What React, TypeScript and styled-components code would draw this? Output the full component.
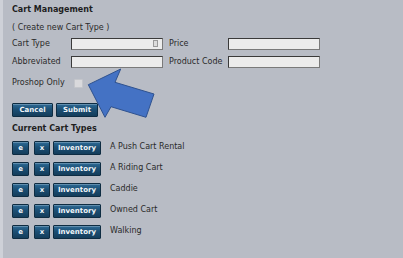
import { FC } from 'react';
import styled, { createGlobalStyle } from 'styled-components';

const GlobalStyle = createGlobalStyle`
  html, body {
    margin: 0;
    padding: 0;
    background: #b8bcc5;
  }
  body {
    font-family: "DejaVu Sans", Verdana, sans-serif;
    color: #2a2a2a;
  }
`;

const Page = styled.div`
  position: relative;
  width: 403px;
  height: 258px;
  background: #b8bcc5;
  border-left: 3px solid #ced1d8;
  box-sizing: border-box;
  padding: 5px 0 0 9px;
  display: flex;
  flex-direction: column;
`;

const Title = styled.div`
  font-size: 8px;
  font-weight: 700;
  line-height: 10px;
  color: #1e1e1e;
`;

const SubTitle = styled.div`
  font-size: 8px;
  line-height: 10px;
  margin-top: 8px;
`;

const FormGrid = styled.div`
  display: grid;
  grid-template-columns: 59px 92px 6px 59px 92px;
  grid-auto-rows: 18px;
  align-items: center;
  margin-top: 2px;
`;

const Label = styled.div`
  font-size: 8px;
  line-height: 10px;
  white-space: nowrap;
`;

const InputBox = styled.div`
  position: relative;
  height: 12px;
  box-sizing: border-box;
  background: #ececec;
  border: 1px solid #3a3a3a;
  border-right-color: #7a7a7a;
  border-bottom-color: #7a7a7a;
`;

const FieldIcon = styled.span`
  position: absolute;
  right: 4px;
  top: 1px;
  width: 5px;
  height: 7px;
  border: 1px solid #9a9a9a;
  box-sizing: border-box;
  background: #dcdcdc;
`;

const CheckRow = styled.div`
  display: flex;
  align-items: center;
  height: 10px;
  margin-top: 7px;
`;

const CheckLabel = styled(Label)`
  width: 59px;
`;

const CheckBox = styled.span`
  display: inline-block;
  width: 7px;
  height: 7px;
  margin-left: 3px;
  background: #d9d9dc;
  border: 1px solid #c4c6cb;
  border-radius: 1px;
`;

const Actions = styled.div`
  display: flex;
  gap: 3px;
  margin-top: 15px;
`;

const Btn = styled.button<{ $w: number; $ml?: number }>`
  width: ${(p) => p.$w}px;
  height: 14px;
  margin-left: ${(p) => p.$ml ?? 0}px;
  padding: 0;
  box-sizing: border-box;
  font-family: "DejaVu Sans", Verdana, sans-serif;
  font-size: 7px;
  font-weight: 700;
  color: #f2f6fa;
  background: linear-gradient(#2e6b96 0%, #1c4f74 45%, #143d5b 100%);
  border: 1px solid #0e2c42;
  border-radius: 1px;
  box-shadow: inset 0 1px 0 rgba(255, 255, 255, 0.25);
  line-height: 12px;
  cursor: pointer;
`;

const SectionTitle = styled(Title)`
  margin-top: 7px;
`;

const TypeList = styled.div`
  display: flex;
  flex-direction: column;
  gap: 7px;
  margin-top: 7px;
`;

const TypeRow = styled.div`
  display: flex;
  align-items: center;
  height: 14px;
`;

const RowName = styled.span`
  font-size: 8px;
  line-height: 10px;
  margin-left: 9px;
  margin-top: -2px;
`;

const Arrow = styled.svg`
  position: absolute;
  left: 77px;
  top: 64px;
`;

const cartTypes = ['A Push Cart Rental', 'A Riding Cart', 'Caddie', 'Owned Cart', 'Walking'];

const App: FC = () => (
  <>
    <GlobalStyle />
    <Page>
      <Title>Cart Management</Title>
      <SubTitle>( Create new Cart Type )</SubTitle>
      <FormGrid>
        <Label>Cart Type</Label>
        <InputBox>
          <FieldIcon />
        </InputBox>
        <span />
        <Label>Price</Label>
        <InputBox />
        <Label>Abbreviated</Label>
        <InputBox />
        <span />
        <Label>Product Code</Label>
        <InputBox />
      </FormGrid>
      <CheckRow>
        <CheckLabel>Proshop Only</CheckLabel>
        <CheckBox />
      </CheckRow>
      <Actions>
        <Btn $w={41}>Cancel</Btn>
        <Btn $w={42}>Submit</Btn>
      </Actions>
      <SectionTitle>Current Cart Types</SectionTitle>
      <TypeList>
        {cartTypes.map((name) => (
          <TypeRow key={name}>
            <Btn $w={17}>e</Btn>
            <Btn $w={16} $ml={5}>x</Btn>
            <Btn $w={48} $ml={3}>Inventory</Btn>
            <RowName>{name}</RowName>
          </TypeRow>
        ))}
      </TypeList>
      <Arrow width="80" height="60" viewBox="0 0 80 60">
        <polygon
          points="8.3,20.7 40.7,5 35,18.3 74,30 66,53.3 31,42.7 25,53.3"
          fill="#4472c4"
          stroke="#2f528f"
          strokeWidth="1"
        />
      </Arrow>
    </Page>
  </>
);

export default App;
